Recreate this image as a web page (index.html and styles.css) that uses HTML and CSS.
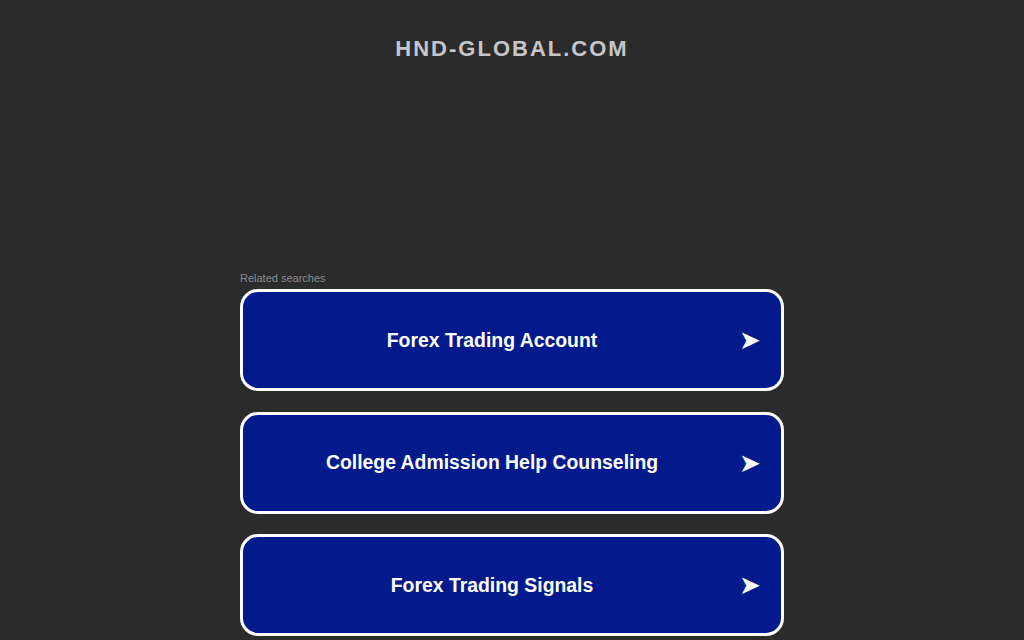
FILE: index.html
```html
<!DOCTYPE html>
<html>
<head>
<meta charset="utf-8">
<link rel="stylesheet" href="styles.css">
</head>
<body>
<header class="header"><h1 class="domain">HND-GLOBAL.COM</h1></header>
<main class="content">
  <div class="label">Related searches</div>
  <div class="list">
    <a class="item" href="#"><span class="text">Forex Trading Account</span><span class="arrow">&#10148;</span></a>
    <a class="item" href="#"><span class="text">College Admission Help Counseling</span><span class="arrow">&#10148;</span></a>
    <a class="item" href="#"><span class="text">Forex Trading Signals</span><span class="arrow">&#10148;</span></a>
  </div>
</main>
</body>
</html>
```
FILE: styles.css
```css
html, body { margin: 0; padding: 0; }
body {
  background: #2b2b2b;
  font-family: "Liberation Sans", Arial, sans-serif;
  height: 640px;
  overflow: hidden;
}
.header { padding-top: 36px; text-align: center; }
.domain {
  margin: 0;
  font-size: 22px;
  line-height: 26px;
  font-weight: bold;
  color: #c6c6ca;
  letter-spacing: 2px;
}
.content { width: 544px; margin: 209px auto 0; }
.label { font-size: 11px; line-height: 14px; color: #8a8a8a; margin-bottom: 4px; }
.list { display: flex; flex-direction: column; gap: 20.5px; }
.item {
  box-sizing: border-box;
  height: 102px;
  border: 3px solid #ffffff;
  border-radius: 18px;
  background: #021a8b;
  display: flex;
  align-items: center;
  text-decoration: none;
  color: #ffffff;
  padding: 0 24px 0 2px;
}
.text { flex: 1; text-align: center; font-size: 19.4px; font-weight: bold; }
.arrow { font-size: 26px; width: 18px; font-family: "DejaVu Sans", sans-serif; }
```
